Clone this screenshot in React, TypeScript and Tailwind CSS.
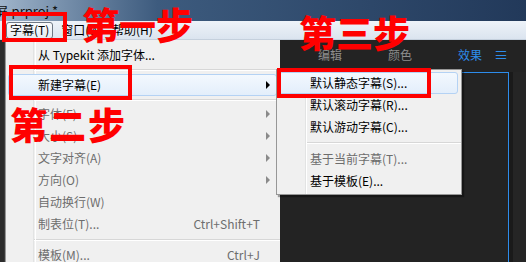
import React from "react";

const FONT = { fontFamily: '"Noto Sans CJK SC", "Noto Sans", sans-serif' };

type Row =
  | { sep: true; h?: string }
  | {
      sep?: false;
      label: string;
      shortcut?: string;
      arrow?: boolean;
      disabled?: boolean;
      active?: boolean;
    };

const TITLE_MENU: Row[] = [
  { label: "从 Typekit 添加字体..." },
  { sep: true },
  { label: "新建字幕(E)", arrow: true, active: true },
  { sep: true, h: "h-[7px]" },
  { label: "字体(F)", arrow: true, disabled: true },
  { label: "大小(S)", arrow: true, disabled: true },
  { label: "文字对齐(A)", arrow: true, disabled: true },
  { label: "方向(O)", arrow: true, disabled: true },
  { label: "自动换行(W)", disabled: true },
  { label: "制表位(T)...", shortcut: "Ctrl+Shift+T", disabled: true },
  { sep: true, h: "h-[9px]" },
  { label: "模板(M)...", shortcut: "Ctrl+J", disabled: true },
];

const NEW_MENU: Row[] = [
  { label: "默认静态字幕(S)...", active: true },
  { label: "默认滚动字幕(R)..." },
  { label: "默认游动字幕(C)..." },
  { sep: true, h: "h-[10px]" },
  { label: "基于当前字幕(T)...", disabled: true },
  { label: "基于模板(E)..." },
];

function MenuRows({ rows, pad, gutter }: { rows: Row[]; pad: string; gutter: string }) {
  return (
    <>
      {rows.map((r, i) =>
        r.sep ? (
          <div key={i} className={`${r.h ?? "h-[8px]"} flex flex-col justify-center ${gutter}`}>
            <div className="h-px bg-[#d7d7d7]" />
            <div className="h-px bg-white" />
          </div>
        ) : (
          <div key={i} className={`relative h-[22px] flex items-center ${pad} pr-[20px]`}>
            {r.active && (
              <div className="absolute inset-y-0 left-[2px] right-[3px] rounded-[3px] border border-[#b4d2f4] bg-gradient-to-b from-[#f3f8fe] to-[#e3eefb]" />
            )}
            <span className={`relative flex-1 ${r.disabled ? "text-[#6d6d6d]" : "text-black"}`}>{r.label}</span>
            {r.shortcut && (
              <span className={`relative ${r.disabled ? "text-[#6d6d6d]" : "text-black"}`}>{r.shortcut}</span>
            )}
            {r.arrow && (
              <span
                className={`absolute right-[10px] top-[7px] w-0 h-0 border-y-[4px] border-y-transparent border-l-[4px] ${
                  r.disabled ? "border-l-[#8a8a8a]" : "border-l-black"
                }`}
              />
            )}
          </div>
        )
      )}
    </>
  );
}

export default function App() {
  return (
    <div className="relative w-[526px] h-[262px] overflow-hidden bg-[#232323] text-[12px]" style={FONT}>
      {/* Title bar */}
      <div className="h-[21px] flex items-center bg-gradient-to-r from-[#9fb4ca] via-[#3d5b7e] via-[30%] to-[#22395a]">
        <span className="ml-[-5px] text-[13px] text-[#111]">屏.prproj *</span>
      </div>

      {/* Menu bar */}
      <div className="h-[19px] flex items-center gap-[8px] pl-[6px] bg-gradient-to-b from-[#eef3f9] to-[#dbe4ef] border-b border-[#c5d0dd]">
        <div className="h-[17px] px-[3px] flex items-center rounded-[3px] border border-[#6e7884] bg-gradient-to-b from-[#fbfcfd] to-[#e4eaf1] text-black">
          字幕(T)
        </div>
        <span className="text-black">窗口(W)</span>
        <span className="text-black">帮助(H)</span>
      </div>

      {/* Body */}
      <div className="flex h-[222px]">
        <div className="w-[5px] bg-[#2c2c2c] border-r border-[#3a3a3a]" />
        <div className="w-[275px]" />
        <div className="flex-1 flex flex-col bg-[#232323]">
          <div className="h-[29px] flex items-center text-[#8d8d8d]">
            <span className="ml-[38px]">编辑</span>
            <span className="ml-[46px]">颜色</span>
            <span className="ml-[46px] text-[#2d8ceb]">效果</span>
            <span className="ml-[12px] text-[#2d8ceb] text-[14px]">≡</span>
          </div>
          <div className="flex flex-1 mt-[3px]">
            <div className="w-[229px] border-t border-r border-[#2d8ceb]" />
            <div className="w-[4px] bg-[#1a1a1a]" />
            <div className="flex-1 bg-[#252525]" />
          </div>
        </div>
      </div>

      {/* Title dropdown menu */}
      <div className="absolute left-[5px] top-[40px] w-[275px] h-[230px] bg-[#f0f0f0] border-l border-[#979797] pt-[4px]">
        <div className="absolute left-[27px] top-0 bottom-0 w-[2px] border-l border-[#e2e3e3] bg-white/0">
          <div className="ml-0 w-px h-full bg-white translate-x-[1px]" />
        </div>
        <MenuRows rows={TITLE_MENU} pad="pl-[32px]" gutter="pl-[28px]" />
      </div>

      {/* New title submenu */}
      <div className="absolute left-[276px] top-[69px] w-[186px] h-[126px] bg-[#f0f0f0] border border-[#979797] shadow-[2px_2px_1px_rgba(0,0,0,0.35)] pt-[2px]">
        <div className="absolute left-[28px] top-0 bottom-0 w-px bg-[#e2e3e3]" />
        <div className="absolute left-[29px] top-0 bottom-0 w-px bg-white" />
        <MenuRows rows={NEW_MENU} pad="pl-[33px]" gutter="pl-[29px]" />
      </div>

      {/* Annotations */}
      <div className="absolute left-[2px] top-[12px] w-[65px] h-[30px] border-[4px] border-[#ff0000]" />
      <div className="absolute left-[9px] top-[65px] w-[123px] h-[35px] border-[4px] border-[#ff0000]" />
      <div className="absolute left-[277px] top-[68px] w-[154px] h-[30px] border-[4px] border-[#ff0000]" />

      <div className="absolute left-[82px] top-[2px] text-[37px] leading-[44px] font-black text-[#ff0000]">第一步</div>
      <div className="absolute left-[10px] top-[102px] text-[37px] leading-[44px] font-black text-[#ff0000] tracking-[2px]">第二步</div>
      <div className="absolute left-[299px] top-[10px] text-[37px] leading-[44px] font-black text-[#ff0000]">第三步</div>
    </div>
  );
}
